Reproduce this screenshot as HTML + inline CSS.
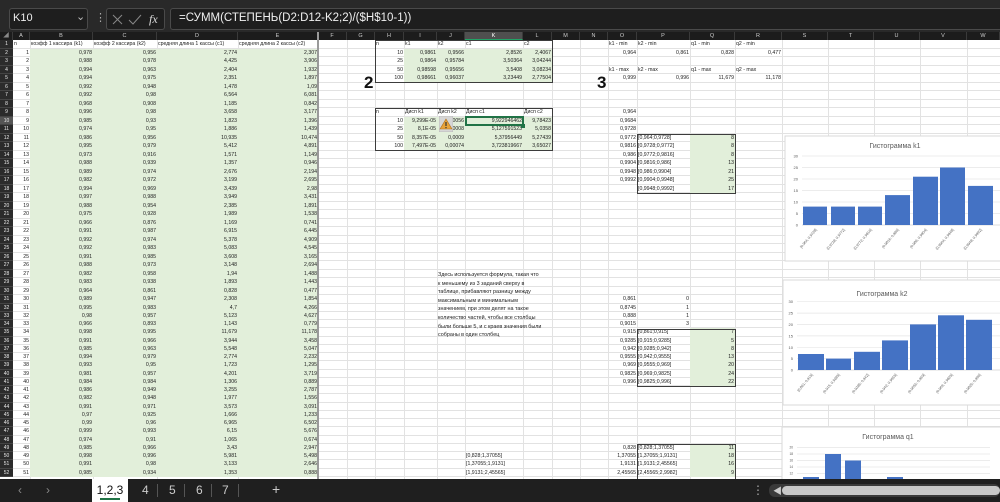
<!DOCTYPE html>
<html><head><meta charset="utf-8">
<style>
*{margin:0;padding:0;box-sizing:border-box}
body{width:1000px;height:502px;overflow:hidden;background:#fff;font-family:"Liberation Sans","Noto Sans CJK SC",sans-serif;position:relative}
#top{position:absolute;left:0;top:0;width:1000px;height:32px;background:#292929}
.box{position:absolute;top:8px;height:22px;background:#1e1e1e;border:1px solid #4a4a4a;border-radius:3px;color:#eee}
#ch{position:absolute;left:0;top:32px;width:1000px;height:8px;background:#1c1c1c;color:#ccc;font-size:5.5px;line-height:8px}
#ch span{position:absolute;top:0;height:8px;text-align:center;border-right:1px solid #3a3a3a}
#grid{position:absolute;left:0;top:40px;width:1000px}
.r{position:relative;height:8.53px;border-bottom:1px solid #e2e2e2;font-size:5.2px;color:#222}
.r2{height:8.25px}
.r>*{position:absolute;top:0;bottom:-1px;white-space:nowrap;text-align:right;padding:1px 1px 0;font-style:normal;font-weight:normal;text-decoration:none;line-height:7px}
.r>i{left:0;width:13px;background:#2b2b2b;color:#e8e8e8;text-align:center;border-bottom:1px solid #444;font-size:5px}
.r>i.sel{background:#555}
.l{text-align:left!important}
.g{background:#e2efda}
.A{left:13px;width:17px}.B{left:30px;width:63px}.C{left:93px;width:64px}.D{left:157px;width:81px}.E{left:238px;width:80px}
.H{left:375px;width:29px}.I{left:404px;width:33px}.J{left:437px;width:28px}.K{left:465px;width:58px}.L{left:523px;width:29px}
.O{left:608px;width:29px}.P{left:637px;width:53px}.Q{left:690px;width:45px}.R{left:735px;width:47px}
.v{position:absolute;top:40px;height:439px;width:1px;background:#e2e2e2}
.bx{position:absolute;border:1px solid #3c3c3c}
#tabs{position:absolute;left:0;top:479px;width:1000px;height:23px;background:#1f1f1f;color:#ccc;font-size:12px}
#tabs span{position:absolute;top:4px}
</style></head><body>
<div id="top">
 <div class="box" style="left:9px;width:79px"><span style="position:absolute;left:3px;top:3px;font-size:11px">K10</span><span style="position:absolute;left:66px;top:1px;font-size:11px;color:#bbb">&#8964;</span></div>
 <span style="position:absolute;left:95px;top:11px;color:#aaa;font-size:11px">&#8942;</span>
 <div class="box" style="left:106px;width:59px">
  <svg width="59" height="22" style="position:absolute;left:0;top:0"><path d="M6 6l9 9M15 6l-9 9" stroke="#888" stroke-width="1" fill="none"/><path d="M22 11l4 4 8-9" stroke="#888" stroke-width="1" fill="none"/></svg>
  <span style="position:absolute;left:42px;top:3px;font-family:'Liberation Serif',serif;font-style:italic;font-size:12px;color:#ddd">fx</span></div>
 <div class="box" style="left:170px;width:835px"><span style="position:absolute;left:8px;top:3px;font-size:11.5px;color:#f0f0f0">=СУММ(СТЕПЕНЬ(D2:D12-K2;2)/($H$10-1))</span></div>
</div>
<div id="ch">
<span style="left:0;width:13px;color:#888">&#9698;</span>
<span style="left:13px;width:17px">A</span><span style="left:30px;width:63px">B</span><span style="left:93px;width:64px">C</span><span style="left:157px;width:81px">D</span><span style="left:238px;width:80px">E</span><span style="left:318px;width:29px">F</span><span style="left:347px;width:28px">G</span><span style="left:375px;width:29px">H</span><span style="left:404px;width:33px">I</span><span style="left:437px;width:28px">J</span><span style="left:465px;width:58px;background:#4f4f4f;color:#fff;border-bottom:1px solid #21a366">K</span><span style="left:523px;width:29px">L</span><span style="left:552px;width:28px">M</span><span style="left:580px;width:28px">N</span><span style="left:608px;width:29px">O</span><span style="left:637px;width:53px">P</span><span style="left:690px;width:45px">Q</span><span style="left:735px;width:47px">R</span><span style="left:782px;width:46px">S</span><span style="left:828px;width:46px">T</span><span style="left:874px;width:46px">U</span><span style="left:920px;width:47px">V</span><span style="left:967px;width:33px">W</span>
</div>
<div class="v" style="left:30px"></div><div class="v" style="left:93px"></div><div class="v" style="left:157px"></div><div class="v" style="left:238px"></div><div class="v" style="left:347px"></div><div class="v" style="left:375px"></div><div class="v" style="left:404px"></div><div class="v" style="left:437px"></div><div class="v" style="left:465px"></div><div class="v" style="left:523px"></div><div class="v" style="left:552px"></div><div class="v" style="left:580px"></div><div class="v" style="left:608px"></div><div class="v" style="left:637px"></div><div class="v" style="left:690px"></div><div class="v" style="left:735px"></div><div class="v" style="left:782px"></div><div class="v" style="left:828px"></div><div class="v" style="left:874px"></div><div class="v" style="left:920px"></div><div class="v" style="left:967px"></div>
<div id="grid">
<div class="r"><i>1</i><b class="A l">n</b><b class="B l">коэфф 1 кассира (k1)</b><b class="C l">коэфф 2 кассира (k2)</b><b class="D l">средняя длина 1 кассы (c1)</b><b class="E l">средняя длина 2 кассы (c2)</b><b class="H l">n</b><b class="I l">k1</b><b class="J l">k2</b><b class="K l">c1</b><b class="L l">c2</b><b class="O l">k1 - min</b><b class="P l">k2 - min</b><b class="Q l">q1 - min</b><b class="R l">q2 - min</b></div>
<div class="r"><i>2</i><b class="A">1</b><b class="B g">0,978</b><b class="C g">0,956</b><b class="D g">2,774</b><b class="E g">2,307</b><b class="H">10</b><b class="I g">0,9861</b><b class="J g">0,9566</b><b class="K g">2,8526</b><b class="L g">2,4067</b><b class="O">0,964</b><b class="P">0,861</b><b class="Q">0,828</b><b class="R">0,477</b></div>
<div class="r"><i>3</i><b class="A">2</b><b class="B g">0,988</b><b class="C g">0,978</b><b class="D g">4,425</b><b class="E g">3,906</b><b class="H">25</b><b class="I g">0,9864</b><b class="J g">0,95784</b><b class="K g">3,50364</b><b class="L g">3,04244</b></div>
<div class="r"><i>4</i><b class="A">3</b><b class="B g">0,994</b><b class="C g">0,963</b><b class="D g">2,404</b><b class="E g">1,932</b><b class="H">50</b><b class="I g">0,98598</b><b class="J g">0,95656</b><b class="K g">3,5408</b><b class="L g">3,08234</b><b class="O l">k1 - max</b><b class="P l">k2 - max</b><b class="Q l">q1 - max</b><b class="R l">q2 - max</b></div>
<div class="r"><i>5</i><b class="A">4</b><b class="B g">0,994</b><b class="C g">0,975</b><b class="D g">2,351</b><b class="E g">1,897</b><b class="H">100</b><b class="I g">0,98661</b><b class="J g">0,96037</b><b class="K g">3,23449</b><b class="L g">2,77504</b><b class="O">0,999</b><b class="P">0,996</b><b class="Q">11,679</b><b class="R">11,178</b></div>
<div class="r"><i>6</i><b class="A">5</b><b class="B g">0,992</b><b class="C g">0,948</b><b class="D g">1,478</b><b class="E g">1,09</b></div>
<div class="r"><i>7</i><b class="A">6</b><b class="B g">0,992</b><b class="C g">0,98</b><b class="D g">6,564</b><b class="E g">6,081</b></div>
<div class="r"><i>8</i><b class="A">7</b><b class="B g">0,968</b><b class="C g">0,908</b><b class="D g">1,185</b><b class="E g">0,842</b></div>
<div class="r"><i>9</i><b class="A">8</b><b class="B g">0,996</b><b class="C g">0,98</b><b class="D g">3,658</b><b class="E g">3,177</b><b class="H l">n</b><b class="I l">Дисп k1</b><b class="J l">Дисп k2</b><b class="K l">Дисп c1</b><b class="L l">Дисп c2</b><b class="O">0,964</b></div>
<div class="r"><i class="sel">10</i><b class="A">9</b><b class="B g">0,985</b><b class="C g">0,93</b><b class="D g">1,823</b><b class="E g">1,396</b><b class="H">10</b><b class="I g">9,299E-05</b><b class="J g">0,00056</b><b class="K g">9,922946462</b><b class="L g">9,78423</b><b class="O">0,9684</b></div>
<div class="r"><i>11</i><b class="A">10</b><b class="B g">0,974</b><b class="C g">0,95</b><b class="D g">1,886</b><b class="E g">1,439</b><b class="H">25</b><b class="I g">8,1E-05</b><b class="J g">0,0008</b><b class="K g">5,127591523</b><b class="L g">5,0358</b><b class="O">0,9728</b></div>
<div class="r"><i>12</i><b class="A">11</b><b class="B g">0,986</b><b class="C g">0,956</b><b class="D g">10,935</b><b class="E g">10,474</b><b class="H">50</b><b class="I g">8,357E-05</b><b class="J g">0,0009</b><b class="K g">5,37956449</b><b class="L g">5,27439</b><b class="O">0,9772</b><b class="P l">[0,964;0,9728]</b><b class="Q g">8</b></div>
<div class="r"><i>13</i><b class="A">12</b><b class="B g">0,995</b><b class="C g">0,979</b><b class="D g">5,412</b><b class="E g">4,891</b><b class="H">100</b><b class="I g">7,497E-05</b><b class="J g">0,00074</b><b class="K g">3,723819667</b><b class="L g">3,65027</b><b class="O">0,9816</b><b class="P l">[0,9728;0,9772]</b><b class="Q g">8</b></div>
<div class="r"><i>14</i><b class="A">13</b><b class="B g">0,973</b><b class="C g">0,916</b><b class="D g">1,571</b><b class="E g">1,149</b><b class="O">0,986</b><b class="P l">[0,9772;0,9816]</b><b class="Q g">8</b></div>
<div class="r"><i>15</i><b class="A">14</b><b class="B g">0,988</b><b class="C g">0,939</b><b class="D g">1,357</b><b class="E g">0,946</b><b class="O">0,9904</b><b class="P l">[0,9816;0,986]</b><b class="Q g">13</b></div>
<div class="r"><i>16</i><b class="A">15</b><b class="B g">0,989</b><b class="C g">0,974</b><b class="D g">2,676</b><b class="E g">2,194</b><b class="O">0,9948</b><b class="P l">[0,986;0,9904]</b><b class="Q g">21</b></div>
<div class="r"><i>17</i><b class="A">16</b><b class="B g">0,982</b><b class="C g">0,972</b><b class="D g">3,199</b><b class="E g">2,695</b><b class="O">0,9992</b><b class="P l">[0,9904;0,9948]</b><b class="Q g">25</b></div>
<div class="r"><i>18</i><b class="A">17</b><b class="B g">0,994</b><b class="C g">0,969</b><b class="D g">3,439</b><b class="E g">2,98</b><b class="P l">[0,9948;0,9992]</b><b class="Q g">17</b></div>
<div class="r"><i>19</i><b class="A">18</b><b class="B g">0,997</b><b class="C g">0,988</b><b class="D g">3,949</b><b class="E g">3,431</b></div>
<div class="r"><i>20</i><b class="A">19</b><b class="B g">0,988</b><b class="C g">0,954</b><b class="D g">2,385</b><b class="E g">1,891</b></div>
<div class="r"><i>21</i><b class="A">20</b><b class="B g">0,975</b><b class="C g">0,928</b><b class="D g">1,989</b><b class="E g">1,538</b></div>
<div class="r"><i>22</i><b class="A">21</b><b class="B g">0,966</b><b class="C g">0,876</b><b class="D g">1,169</b><b class="E g">0,741</b></div>
<div class="r"><i>23</i><b class="A">22</b><b class="B g">0,991</b><b class="C g">0,987</b><b class="D g">6,915</b><b class="E g">6,445</b></div>
<div class="r"><i>24</i><b class="A">23</b><b class="B g">0,992</b><b class="C g">0,974</b><b class="D g">5,378</b><b class="E g">4,909</b></div>
<div class="r"><i>25</i><b class="A">24</b><b class="B g">0,992</b><b class="C g">0,983</b><b class="D g">5,083</b><b class="E g">4,545</b></div>
<div class="r"><i>26</i><b class="A">25</b><b class="B g">0,991</b><b class="C g">0,985</b><b class="D g">3,608</b><b class="E g">3,165</b></div>
<div class="r"><i>27</i><b class="A">26</b><b class="B g">0,988</b><b class="C g">0,973</b><b class="D g">3,148</b><b class="E g">2,694</b></div>
<div class="r"><i>28</i><b class="A">27</b><b class="B g">0,982</b><b class="C g">0,958</b><b class="D g">1,94</b><b class="E g">1,488</b></div>
<div class="r"><i>29</i><b class="A">28</b><b class="B g">0,983</b><b class="C g">0,938</b><b class="D g">1,893</b><b class="E g">1,443</b></div>
<div class="r"><i>30</i><b class="A">29</b><b class="B g">0,964</b><b class="C g">0,861</b><b class="D g">0,828</b><b class="E g">0,477</b></div>
<div class="r r2"><i>31</i><b class="A">30</b><b class="B g">0,989</b><b class="C g">0,947</b><b class="D g">2,308</b><b class="E g">1,854</b><b class="O">0,861</b><b class="P">0</b></div>
<div class="r r2"><i>32</i><b class="A">31</b><b class="B g">0,995</b><b class="C g">0,983</b><b class="D g">4,7</b><b class="E g">4,266</b><b class="O">0,8745</b><b class="P">1</b></div>
<div class="r r2"><i>33</i><b class="A">32</b><b class="B g">0,98</b><b class="C g">0,957</b><b class="D g">5,123</b><b class="E g">4,627</b><b class="O">0,888</b><b class="P">1</b></div>
<div class="r r2"><i>34</i><b class="A">33</b><b class="B g">0,966</b><b class="C g">0,893</b><b class="D g">1,143</b><b class="E g">0,779</b><b class="O">0,9015</b><b class="P">3</b></div>
<div class="r r2"><i>35</i><b class="A">34</b><b class="B g">0,998</b><b class="C g">0,995</b><b class="D g">11,679</b><b class="E g">11,178</b><b class="O">0,915</b><b class="P l">[0,861;0,915]</b><b class="Q g">7</b></div>
<div class="r r2"><i>36</i><b class="A">35</b><b class="B g">0,991</b><b class="C g">0,966</b><b class="D g">3,944</b><b class="E g">3,458</b><b class="O">0,9285</b><b class="P l">[0,915;0,9285]</b><b class="Q g">5</b></div>
<div class="r r2"><i>37</i><b class="A">36</b><b class="B g">0,985</b><b class="C g">0,963</b><b class="D g">5,548</b><b class="E g">5,047</b><b class="O">0,942</b><b class="P l">[0,9285;0,942]</b><b class="Q g">8</b></div>
<div class="r r2"><i>38</i><b class="A">37</b><b class="B g">0,994</b><b class="C g">0,979</b><b class="D g">2,774</b><b class="E g">2,232</b><b class="O">0,9555</b><b class="P l">[0,942;0,9555]</b><b class="Q g">13</b></div>
<div class="r r2"><i>39</i><b class="A">38</b><b class="B g">0,993</b><b class="C g">0,95</b><b class="D g">1,723</b><b class="E g">1,295</b><b class="O">0,969</b><b class="P l">[0,9555;0,969]</b><b class="Q g">20</b></div>
<div class="r r2"><i>40</i><b class="A">39</b><b class="B g">0,981</b><b class="C g">0,957</b><b class="D g">4,201</b><b class="E g">3,719</b><b class="O">0,9825</b><b class="P l">[0,969;0,9825]</b><b class="Q g">24</b></div>
<div class="r r2"><i>41</i><b class="A">40</b><b class="B g">0,984</b><b class="C g">0,984</b><b class="D g">1,306</b><b class="E g">0,889</b><b class="O">0,996</b><b class="P l">[0,9825;0,996]</b><b class="Q g">22</b></div>
<div class="r r2"><i>42</i><b class="A">41</b><b class="B g">0,986</b><b class="C g">0,949</b><b class="D g">3,255</b><b class="E g">2,787</b></div>
<div class="r r2"><i>43</i><b class="A">42</b><b class="B g">0,982</b><b class="C g">0,948</b><b class="D g">1,977</b><b class="E g">1,556</b></div>
<div class="r r2"><i>44</i><b class="A">43</b><b class="B g">0,991</b><b class="C g">0,971</b><b class="D g">3,573</b><b class="E g">3,091</b></div>
<div class="r r2"><i>45</i><b class="A">44</b><b class="B g">0,97</b><b class="C g">0,925</b><b class="D g">1,666</b><b class="E g">1,233</b></div>
<div class="r r2"><i>46</i><b class="A">45</b><b class="B g">0,99</b><b class="C g">0,96</b><b class="D g">6,965</b><b class="E g">6,502</b></div>
<div class="r r2"><i>47</i><b class="A">46</b><b class="B g">0,999</b><b class="C g">0,993</b><b class="D g">6,15</b><b class="E g">5,676</b></div>
<div class="r r2"><i>48</i><b class="A">47</b><b class="B g">0,974</b><b class="C g">0,91</b><b class="D g">1,065</b><b class="E g">0,674</b></div>
<div class="r r2"><i>49</i><b class="A">48</b><b class="B g">0,985</b><b class="C g">0,966</b><b class="D g">3,43</b><b class="E g">2,947</b><b class="O">0,828</b><b class="P l">[0,828;1,37055]</b><b class="Q g">11</b></div>
<div class="r r2"><i>50</i><b class="A">49</b><b class="B g">0,998</b><b class="C g">0,996</b><b class="D g">5,981</b><b class="E g">5,498</b><b class="K l">[0,828;1,37055]</b><b class="O">1,37055</b><b class="P l">[1,37055;1,9131]</b><b class="Q g">18</b></div>
<div class="r r2"><i>51</i><b class="A">50</b><b class="B g">0,991</b><b class="C g">0,98</b><b class="D g">3,133</b><b class="E g">2,646</b><b class="K l">[1,37055;1,9131]</b><b class="O">1,9131</b><b class="P l">[1,9131;2,45565]</b><b class="Q g">16</b></div>
<div class="r r2"><i>52</i><b class="A">51</b><b class="B g">0,985</b><b class="C g">0,934</b><b class="D g">1,353</b><b class="E g">0,888</b><b class="K l">[1,9131;2,45565]</b><b class="O">2,45565</b><b class="P l">[2,45565;2,9982]</b><b class="Q g">9</b></div>
</div>
<!-- freeze line -->
<div style="position:absolute;left:317px;top:32px;width:2px;height:447px;background:#9a9a9a"></div>
<!-- table boxes -->
<div class="bx" style="left:375px;top:40px;width:178px;height:43px"></div>
<div class="bx" style="left:375px;top:108px;width:178px;height:43px"></div>
<div class="bx" style="left:637px;top:134px;width:99px;height:60px"></div>
<div class="bx" style="left:637px;top:329px;width:99px;height:58px"></div>
<div class="bx" style="left:637px;top:444px;width:99px;height:40px"></div>
<div style="position:absolute;left:465px;top:116px;width:59px;height:10px;border:2px solid #217346"></div>
<div style="position:absolute;left:521px;top:124px;width:4px;height:4px;background:#217346"></div>
<svg style="position:absolute;left:439px;top:116px" width="14" height="16"><rect x="0" y="0" width="14" height="16" fill="#d6d6d6" stroke="#aaa" stroke-width="0.6"/><path d="M7 3L13 13H1Z" fill="#e8a33a" stroke="#b07020" stroke-width="0.6"/><rect x="6.4" y="6" width="1.2" height="4" fill="#333"/><rect x="6.4" y="11" width="1.2" height="1.2" fill="#333"/></svg>
<div style="position:absolute;left:364px;top:73px;font-size:17px;font-weight:bold;color:#111">2</div>
<div style="position:absolute;left:597px;top:73px;font-size:17px;font-weight:bold;color:#111">3</div>
<div style="position:absolute;left:438px;top:271px;font-size:5.4px;line-height:8.6px;color:#222;white-space:nowrap">Здесь используется формула, такая что<br>к меньшему из 3 заданий сверху в<br>таблице, прибавляют разницу между<br>максимальным и минимальным<br>значением, при этом делят на такое<br>количество частей, чтобы все столбцы<br>были больше 5, и с краев значения были<br>собраны в один столбец</div>
<!-- charts -->
<svg style="position:absolute;left:780px;top:130px" width="220" height="349" viewBox="780 130 220 349" font-family="Liberation Sans, sans-serif">
<rect x="785" y="136" width="220" height="125" fill="#fff" stroke="#d9d9d9"/>
<text x="895" y="148" font-size="7" fill="#595959" text-anchor="middle">Гистограмма k1</text>
<g stroke="#e6e6e6" stroke-width="0.7"><path d="M802 156H1000M802 167.5H1000M802 179H1000M802 190.5H1000M802 202H1000M802 213.5H1000"/></g>
<path d="M802 225H1000" stroke="#d0d0d0" stroke-width="0.7"/>
<g font-size="4" fill="#595959" text-anchor="end"><text x="798" y="157.5">30</text><text x="798" y="169">25</text><text x="798" y="180.5">20</text><text x="798" y="192">15</text><text x="798" y="203.5">10</text><text x="798" y="215">5</text><text x="798" y="226.5">0</text></g>
<g fill="#4472c4"><rect x="803" y="206.6" width="24" height="18.4"/><rect x="831" y="206.6" width="24" height="18.4"/><rect x="858" y="206.6" width="24" height="18.4"/><rect x="885" y="195.1" width="25" height="29.9"/><rect x="913" y="176.7" width="25" height="48.3"/><rect x="940" y="167.5" width="25" height="57.5"/><rect x="968" y="185.9" width="25" height="39.1"/></g>
<g font-size="3.6" fill="#595959" text-anchor="end"><text transform="translate(817 230) rotate(-50)">[0,964; 0,9728]</text><text transform="translate(845 230) rotate(-50)">(0,9728; 0,9772]</text><text transform="translate(872 230) rotate(-50)">(0,9772; 0,9816]</text><text transform="translate(899 230) rotate(-50)">(0,9816; 0,986]</text><text transform="translate(927 230) rotate(-50)">(0,986; 0,9904]</text><text transform="translate(954 230) rotate(-50)">(0,9904; 0,9948]</text><text transform="translate(982 230) rotate(-50)">(0,9948; 0,9992]</text></g>
<rect x="783" y="280" width="220" height="125" fill="#fff" stroke="#d9d9d9"/>
<text x="882" y="296" font-size="7" fill="#595959" text-anchor="middle">Гистограмма k2</text>
<g stroke="#e6e6e6" stroke-width="0.7"><path d="M797 301.7H1000M797 313.1H1000M797 324.5H1000M797 335.9H1000M797 347.3H1000M797 358.7H1000"/></g>
<path d="M797 370H1000" stroke="#d0d0d0" stroke-width="0.7"/>
<g font-size="4" fill="#595959" text-anchor="end"><text x="793" y="303">30</text><text x="793" y="314.5">25</text><text x="793" y="326">20</text><text x="793" y="337.5">15</text><text x="793" y="349">10</text><text x="793" y="360">5</text><text x="793" y="371.5">0</text></g>
<g fill="#4472c4"><rect x="798" y="354" width="26" height="16"/><rect x="826" y="358.6" width="25" height="11.4"/><rect x="854" y="351.8" width="26" height="18.2"/><rect x="882" y="340.4" width="26" height="29.6"/><rect x="910" y="324.4" width="26" height="45.6"/><rect x="938" y="315.3" width="26" height="54.7"/><rect x="966" y="319.8" width="26" height="50.2"/></g>
<g font-size="3.6" fill="#595959" text-anchor="end"><text transform="translate(813 375) rotate(-50)">[0,861; 0,915]</text><text transform="translate(840 375) rotate(-50)">(0,915; 0,9285]</text><text transform="translate(869 375) rotate(-50)">(0,9285; 0,942]</text><text transform="translate(897 375) rotate(-50)">(0,942; 0,9555]</text><text transform="translate(925 375) rotate(-50)">(0,9555; 0,969]</text><text transform="translate(953 375) rotate(-50)">(0,969; 0,9825]</text><text transform="translate(981 375) rotate(-50)">(0,9825; 0,996]</text></g>
<rect x="782" y="427" width="220" height="60" fill="#fff" stroke="#d9d9d9"/>
<text x="888" y="439" font-size="7" fill="#595959" text-anchor="middle">Гистограмма q1</text>
<g stroke="#e6e6e6" stroke-width="0.7"><path d="M797 447.5H990M797 454H990M797 460.5H990M797 467H990M797 473.5H990"/></g>
<g font-size="3.2" fill="#595959" text-anchor="end"><text x="793" y="448.5">20</text><text x="793" y="455">18</text><text x="793" y="461.5">16</text><text x="793" y="468">14</text><text x="793" y="474.5">12</text></g>
<g fill="#4472c4"><rect x="803" y="477" width="16" height="10"/><rect x="825" y="454" width="16" height="30"/><rect x="845" y="460.5" width="16" height="30"/><rect x="887" y="477" width="16" height="10"/></g>
</svg>
<div id="tabs">
<span style="left:18px;color:#888">&#8249;</span><span style="left:46px;color:#888">&#8250;</span>
<div style="position:absolute;left:92px;top:0;width:36px;height:23px;background:#fff;color:#111;font-size:12px;text-align:center;padding-top:4px">1,2,3<div style="position:absolute;left:8px;top:19px;width:20px;height:2px;background:#217346"></div></div>
<span style="left:142px">4</span><span style="left:169px">5</span><span style="left:196px">6</span><span style="left:222px">7</span>
<div style="position:absolute;left:157px;top:5px;width:1px;height:13px;background:#555"></div><div style="position:absolute;left:184px;top:5px;width:1px;height:13px;background:#555"></div><div style="position:absolute;left:211px;top:5px;width:1px;height:13px;background:#555"></div><div style="position:absolute;left:238px;top:5px;width:1px;height:13px;background:#555"></div>
<span style="left:272px;font-size:14px;top:2px">+</span>
<span style="left:752px;color:#aaa">&#8942;</span>
<div style="position:absolute;left:769px;top:5px;width:231px;height:13px;background:#3a3a3a;border-radius:6px"></div>
<span style="left:773px;top:5px;font-size:9px;color:#ccc">&#9664;</span>
<div style="position:absolute;left:782px;top:7px;width:218px;height:9px;background:#c8c8c8;border-radius:5px"></div>
</div>
</body></html>
